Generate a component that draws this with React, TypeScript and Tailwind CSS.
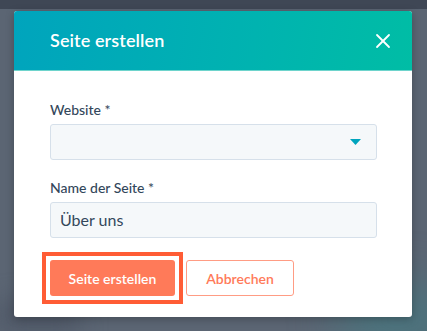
import { X } from "lucide-react";

export default function App() {
  return (
    <div
      className="relative min-h-[331px] w-full overflow-hidden bg-[#5b6573] pt-[11px] text-[#33475b]"
      style={{ fontFamily: "Lato, 'Open Sans', sans-serif" }}
    >
      {/* blurred page behind the dialog */}
      <div className="absolute inset-x-0 top-0 h-[9px] bg-[#3f4755]" />
      <div className="absolute -bottom-6 right-[-30px] h-[70px] w-[120px] rounded-full bg-[#3f7f86]/60 blur-xl" />
      <div className="absolute bottom-0 left-0 h-[30px] w-[80px] bg-[#4d5665] blur-md" />

      <div className="relative ml-[14px] w-[398px] overflow-hidden rounded-[3px] bg-white shadow-[0_2px_8px_rgba(0,0,0,0.25)]">
        {/* header */}
        <div className="flex h-[60px] items-center justify-between border-b border-[#6ed4cc] bg-[linear-gradient(100deg,#00a4bd_0%,#00b3b0_60%,#00bda5_100%)] pl-[36px] pr-[17px]">
          <h1 className="text-[18px] font-semibold tracking-[0.1px] text-white">
            Seite erstellen
          </h1>
          <X className="h-[24px] w-[24px] text-white" strokeWidth={1.8} />
        </div>

        {/* body */}
        <div className="pb-[21px] pl-[36px] pr-[35px] pt-[29px]">
          <label className="block text-[14px] font-medium leading-[20px]">
            Website *
          </label>
          <div className="mt-[4px] flex h-[36px] items-center justify-end rounded-[3px] border border-[#d6e0ea] bg-[#f5f8fa] pr-[15px]">
            <svg width="11" height="6" viewBox="0 0 11 6">
              <path d="M0 0h11L5.5 6z" fill="#00a4bd" />
            </svg>
          </div>

          <label className="mt-[18px] block text-[14px] font-medium leading-[20px]">
            Name der Seite *
          </label>
          <div className="mt-[4px] flex h-[36px] items-center rounded-[3px] border border-[#d6e0ea] bg-[#f5f8fa] pl-[9px] text-[16px]">
            Über uns
          </div>

          <div className="mt-[22px] flex gap-[11px]">
            <button className="relative h-[36px] w-[125px] rounded-[3px] bg-[#ff7a59] text-[14px] font-semibold text-white">
              Seite erstellen
              <span className="pointer-events-none absolute -inset-[8px] border-4 border-[#ff5c35]" />
            </button>
            <button className="h-[36px] w-[108px] rounded-[3px] border border-[#ff9c84] bg-white text-[14px] font-semibold text-[#ff7a59]">
              Abbrechen
            </button>
          </div>
        </div>
      </div>
    </div>
  );
}
